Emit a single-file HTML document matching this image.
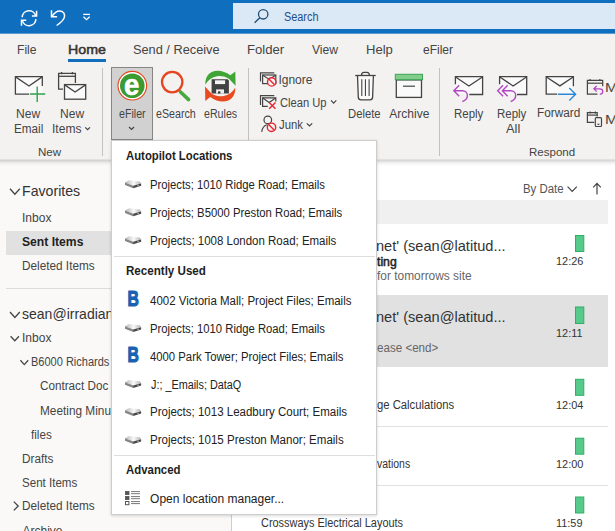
<!DOCTYPE html>
<html lang="en">
<head>
<meta charset="utf-8">
<title>Outlook - eFiler menu</title>
<style>
html,body{margin:0;padding:0;}
body{width:615px;height:531px;overflow:hidden;background:#fff;font-family:"Liberation Sans",sans-serif;}
#app{position:relative;width:615px;height:531px;overflow:hidden;background:#fff;}
.abs{position:absolute;}
.t{position:absolute;white-space:nowrap;line-height:1;transform-origin:0 0;z-index:2;}
.t.mn{z-index:12;}
.t.sb{-webkit-text-stroke:.5px currentColor;}
svg{position:absolute;overflow:visible;}
#titlebar{left:0;top:0;width:615px;height:34px;background:linear-gradient(#106ebe 0,#106ebe 33px,#5b9acf 33px,#5b9acf 34px);}
#search{left:233px;top:3px;width:382px;height:26px;background:#dbe8f6;}
#tabs{left:0;top:34px;width:615px;height:29px;background:#f3f2f1;}
#ribbon{left:0;top:63px;width:615px;height:97px;background:#f3f2f1;}
#ribshadow{left:0;top:159px;width:615px;height:7px;background:linear-gradient(rgba(0,0,0,.02),rgba(0,0,0,.16) 20%,rgba(0,0,0,.08) 45%,rgba(0,0,0,.03) 70%,rgba(0,0,0,0));}
#folders{left:0;top:160px;width:231px;height:371px;background:#faf9f8;}
#split{left:231px;top:160px;width:1px;height:371px;background:#cdcdcd;}
#list{left:232px;top:160px;width:383px;height:368px;background:#fff;}
#menu{left:111px;top:140px;width:266px;height:375px;box-sizing:border-box;background:#fff;border:1px solid #cdcdcd;z-index:10;box-shadow:0 1px 3px rgba(0,0,0,.16);}
.msep{position:absolute;left:2px;width:261px;height:1px;background:#dedede;}
.z11{z-index:11;}
</style>
</head>
<body>
<div id="app">
<div id="titlebar" class="abs"></div>
<div id="search" class="abs"></div>
<div id="tabs" class="abs"></div>
<div id="ribbon" class="abs"></div>
<div id="folders" class="abs"></div>
<div id="split" class="abs"></div>
<div id="list" class="abs"></div>
<div id="ribshadow" class="abs"></div>
<div class="abs" style="left:68px;top:59px;width:38px;height:3px;background:#106ebe;"></div>
<div class="abs" style="left:102px;top:68px;width:1px;height:88px;background:#c2c2c2;"></div>
<div class="abs" style="left:248px;top:68px;width:1px;height:88px;background:#c2c2c2;"></div>
<div class="abs" style="left:439px;top:68px;width:1px;height:88px;background:#c2c2c2;"></div>
<div class="abs" style="left:111px;top:67px;width:42px;height:73px;box-sizing:border-box;background:#d1d1d1;border:1px solid #858585;"></div>
<div class="abs" style="left:6px;top:231px;width:225px;height:24px;background:#e1e1e1;"></div>
<div class="abs" style="left:6px;top:288px;width:225px;height:1px;background:#dcdcdc;"></div>
<div class="abs" style="left:232px;top:199.5px;width:376px;height:24px;background:#f0f0f0;"></div>
<div class="abs" style="left:232px;top:295px;width:376px;height:72.3px;background:#e1e1e1;"></div>
<div class="abs" style="left:232px;top:426px;width:376px;height:1px;background:#e1e1e1;"></div>
<div class="abs" style="left:232px;top:485px;width:376px;height:1px;background:#e1e1e1;"></div>
<svg id="icons" width="615" height="531" viewBox="0 0 615 531" style="left:0;top:0;z-index:3" fill="none" stroke-linecap="butt" stroke-linejoin="miter">
<!-- title bar icons -->
<g stroke="#fff" stroke-width="1.5">
<path d="M22.200 17.300 A6.900 6.900 0 0 1 35.800 16"/>
<path d="M36.600 10.700 V16.100 H31.900"/>
<path d="M35.900 19.100 A6.900 6.900 0 0 1 22.300 20.400"/>
<path d="M21.500 25.700 V20.300 H26.200"/>
<path d="M51.500 10.300 V16.700 H57.100"/>
<path d="M52.200 16.200 C54.500 12.300 57.700 10.800 60.100 10.900 C63.400 11.100 65.100 14 64.400 17.100 C63.700 20.200 60.400 22.900 56.600 25.500"/>
<path d="M83.2 14.4 H89.9" stroke-width="1.3"/>
<path d="M83.5 16.7 L86.55 19.6 L89.6 16.7" stroke-width="1.3"/>
</g>
<g stroke="#1f4e79" stroke-width="1.3">
<circle cx="263.2" cy="14.3" r="4.7"/>
<path d="M259.8 17.8 L254.6 22.8"/>
</g>
<!-- New Email -->
<g stroke="#444" stroke-width="1.3">
<rect x="15.400" y="76.600" width="26.900" height="17.600" fill="#fafafa" stroke="none"/><path d="M29 94.2 H15.4 V76.6 H42.3 V86"/>
<path d="M15.6 76.9 L29 86 L42.1 76.9"/>
</g>
<path d="M29.8 94 H45.2 M37.2 86.4 V102" stroke="#2fa24b" stroke-width="1.4"/>
<!-- New Items -->
<g stroke="#444" stroke-width="1.3">
<path d="M63 89.2 H58.6 V73.3 H75.4 V83"/>
<path d="M58.6 76.3 H75.4"/>
<path d="M61.6 72 V74.3 M72.4 72 V74.3"/>
<rect x="64.5" y="84.6" width="21.2" height="14.6" fill="#fafafa"/>
<path d="M64.7 84.9 L75.1 92 L85.5 84.9"/>
</g>
<path d="M85.2 127.3 L87.6 129.7 L90 127.3" stroke="#444" stroke-width="1.2"/>
<!-- eFiler -->
<circle cx="132.3" cy="85.7" r="14.3" fill="#fff" stroke="#e5461f" stroke-width="1.1"/>
<circle cx="132.3" cy="85.7" r="12.3" fill="#3b9a30"/>
<path d="M129 127 L131.5 129.5 L134 127" stroke="#444" stroke-width="1.2"/>
<!-- eSearch -->
<path d="M180.5 92 L188.6 99.6" stroke="#47a83f" stroke-width="3.6" stroke-linecap="round"/>
<circle cx="172.2" cy="82.1" r="10.2" stroke="#e5461f" stroke-width="2.3"/>
<!-- eRules -->
<path id="era" d="M205.4 84.6 C205 79 207.300 74.3 211.800 72.100 C217 69.600 224 70.700 230.400 75.300 L235.300 71.500 L235.600 85.800 L228.900 78.700 C224.500 76.300 220.500 75.700 217 76.300 C212 77.200 208 80.200 205.400 84.600 Z" fill="#3fa535"/>
<path d="M205.4 84.6 C205 79 207.300 74.3 211.800 72.100 C217 69.600 224 70.700 230.400 75.300 L235.300 71.500 L235.600 85.800 L228.900 78.700 C224.500 76.300 220.500 75.700 217 76.300 C212 77.200 208 80.200 205.400 84.600 Z" fill="#ea4a1f" transform="rotate(180 220.300 86.200)"/>
<path d="M211.6 79.2 H227.6 L228.9 80.5 V93.5 H211.6 Z" fill="#414141"/>
<rect x="215" y="80.3" width="10.1" height="3.8" fill="#f4f4f4"/>
<rect x="216.100" y="89.4" width="7.9" height="4.1" fill="#eee"/>
<rect x="218" y="91.400" width="2.4" height="2.1" fill="#333"/>
<!-- Ignore -->
<g stroke="#444" stroke-width="1.2">
<path d="M260.500 81.6 V72.8 H274.3"/>
<rect x="262.6" y="75" width="13.2" height="8.6"/>
<path d="M262.800 75.2 L269.2 79.4 L275.6 75.2"/>
</g>
<circle cx="271.7" cy="81.9" r="4.200" fill="#f3f3f3" stroke="#e8262f" stroke-width="1.4"/>
<path d="M268.800 79 L274.600 84.800" stroke="#e8262f" stroke-width="1.4"/>
<!-- Clean Up -->
<g stroke="#444" stroke-width="1.2">
<path d="M260.500 105.100 V95.7 H274.3"/>
<path d="M267.800 106.400 H262.600 V97.900 H275.800 V101.500"/>
<path d="M262.800 98.100 L269.200 102.600 L275.600 98.100"/>
</g>
<path d="M269.2 102.500 L275.500 108.800 M275.500 102.500 L269.200 108.800" stroke="#e8262f" stroke-width="1.4"/>
<path d="M331 100.400 L333.650 103.050 L336.300 100.400" stroke="#444" stroke-width="1.2"/>
<!-- Junk -->
<g stroke="#444" stroke-width="1.200">
<circle cx="267.800" cy="119.900" r="3.800"/>
<path d="M261.700 131.800 C262.200 128 264 125.700 266.800 124.800"/>
</g>
<circle cx="271.500" cy="127.300" r="4.200" fill="#f3f3f3" stroke="#e8262f" stroke-width="1.400"/>
<path d="M268.600 124.400 L274.400 130.200" stroke="#e8262f" stroke-width="1.400"/>
<path d="M306.800 123.300 L309.500 126 L312.200 123.300" stroke="#444" stroke-width="1.200"/>
<!-- Delete -->
<g stroke="#444" stroke-width="1.300">
<path d="M357.500 75.600 L358.300 97.400 Q358.500 99.800 360.900 99.800 H370 Q372.400 99.800 372.600 97.400 L373.400 75.600" fill="#fafafa"/>
<path d="M355.200 75.500 H375.700"/>
<path d="M361.500 75.300 Q361.600 72.300 364 72.300 H367 Q369.300 72.300 369.400 75.300"/>
<path d="M361.800 79.200 V96 M365.450 79.200 V96 M369.100 79.200 V96" stroke-width="1.100"/>
</g>
<!-- Archive -->
<rect x="396.300" y="79.900" width="25.200" height="17.500" fill="#fafafa" stroke="#444" stroke-width="1.300"/>
<rect x="395.300" y="74.300" width="27.200" height="5.400" fill="#82cd8c" stroke="#3aa554" stroke-width="1"/>
<path d="M403 86.200 H415" stroke="#444" stroke-width="1.200"/>
<!-- Reply -->
<g stroke="#444" stroke-width="1.300">
<rect x="455.400" y="76.700" width="27.200" height="17.800" fill="#fafafa" stroke="none"/><path d="M455.400 84.300 V76.700 H482.600 V94.500 H469.300"/>
<path d="M455.600 77 L468.900 86 L482.400 77"/>
</g>
<path d="M459.200 85.200 L453.800 90.700 L459.200 96.200 M454 90.700 H462.400 C465.600 90.700 467.400 93 467.400 95.600 C467.400 98.400 465.400 100.600 462.400 101.500" stroke="#b146c2" stroke-width="1.400"/>
<!-- Reply All -->
<g stroke="#444" stroke-width="1.300">
<rect x="499.600" y="76.700" width="27.100" height="17.800" fill="#fafafa" stroke="none"/><path d="M499.600 84.300 V76.700 H526.700 V94.500 H517"/>
<path d="M499.800 77 L513.100 86 L526.500 77"/>
</g>
<path d="M503.100 85.200 L497.700 90.700 L503.100 96.200 M507.700 85.200 L502.300 90.700 L507.700 96.200 M502.500 90.700 H510.700 C513.900 90.700 515.700 93 515.700 95.600 C515.700 98.400 513.700 100.600 510.700 101.500" stroke="#b146c2" stroke-width="1.400"/>
<!-- Forward -->
<g stroke="#444" stroke-width="1.300">
<rect x="546.200" y="76.700" width="27.200" height="17.500" fill="#fafafa" stroke="none"/><path d="M573.400 86.300 V76.700 H546.200 V94.200 H557.200"/>
<path d="M546.400 77 L559.900 85.900 L573.200 77"/>
</g>
<path d="M558 94.300 H575.400 M569.300 88 L575.600 94.300 L569.300 100.600" stroke="#2b88d8" stroke-width="1.400"/>
<!-- Meeting reply -->
<g stroke="#444" stroke-width="1.200">
<path d="M602.700 86.300 V80.300 H587.400 V94.100 H597.400"/>
<path d="M587.400 83.200 H602.700"/>
<path d="M590.100 79 V81 M599.900 79 V81"/>
</g>
<path d="M596.700 86 L593.900 88.800 L596.700 91.600 M594 88.800 H599.800 C601.700 88.800 602.800 90 602.800 91.500 C602.800 93 601.600 94.100 599.800 94.300" stroke="#b146c2" stroke-width="1.300"/>
<!-- Meeting 2 -->
<g stroke="#444" stroke-width="1.200">
<path d="M597.200 116.600 V112.700 H587.400 V122.300 H594.200"/>
<path d="M587.400 115.100 H597.200"/>
<path d="M590.100 111.400 V113.400 M595.400 111.400 V113.400"/>
<rect x="595.300" y="117.600" width="6.200" height="8.900" rx="1"/>
<path d="M597.400 124.300 H599.400"/>
</g>
<!-- folder chevrons -->
<g stroke="#444" stroke-width="1.300">
<path d="M10 188.800 L14.900 194.300 L19.800 188.800"/>
<path d="M10 312 L14.900 317.500 L19.800 312"/>
<path d="M10.600 336.300 L14.800 340.800 L19 336.300"/>
<path d="M20.400 360.300 L24.300 364.600 L28.200 360.300"/>
<path d="M13.800 501.600 L18.200 506 L13.800 510.400"/>
</g>
<!-- By Date chevron + arrow -->
<g stroke="#444" stroke-width="1.200">
<path d="M567.600 186.600 L572.200 191.400 L576.800 186.600"/>
<path d="M597 194.400 V183.600 M593.200 187.300 L597 183.400 L600.800 187.300"/>
</g>
<!-- category blocks -->
<g fill="#57c98a" stroke="#2fae66" stroke-width="1">
<rect x="575.500" y="235.500" width="8.300" height="16"/>
<rect x="575.500" y="307" width="8.300" height="16.500"/>
<rect x="575.500" y="379.300" width="8.300" height="16"/>
<rect x="575.500" y="438.200" width="8.300" height="16"/>
<rect x="575.500" y="497" width="8.300" height="16"/>
</g>
</svg>
<span class="t" style="left:123.900px;top:69.600px;font-size:30px;font-weight:700;color:#fff;z-index:4;transform:scaleX(.92);-webkit-text-stroke:.6px #fff;">e</span>

<div id="menu" class="abs">
<div class="msep" style="top:115px"></div>
<div class="msep" style="top:314px"></div>
</div>
<svg id="micons" width="615" height="531" viewBox="0 0 615 531" style="left:0;top:0;z-index:11" fill="none">
<defs><linearGradient id="dtop" x1="0" y1="0" x2="1" y2="0"><stop offset="0" stop-color="#b4b4b4"/><stop offset=".55" stop-color="#fafafa"/><stop offset="1" stop-color="#b0b0b0"/></linearGradient></defs>
<g transform="translate(125 180.3)">
<path d="M0 2.300 L4 0 L14.800 1.300 L16.100 3.200 L8.200 5.500 Z" fill="url(#dtop)"/>
<path d="M0 2.300 L8.200 5.500 V8 L0 4.700 Z" fill="#858585"/>
<path d="M8.200 5.500 L16.100 3.200 V5.500 L8.200 8 Z" fill="#474747"/>
<path d="M12.300 5 L14 4.500 V5.700 L12.300 6.200 Z" fill="#9aa0b4"/>
</g>
<g transform="translate(125 208.3)">
<path d="M0 2.300 L4 0 L14.800 1.300 L16.100 3.200 L8.200 5.500 Z" fill="url(#dtop)"/>
<path d="M0 2.300 L8.200 5.500 V8 L0 4.700 Z" fill="#858585"/>
<path d="M8.200 5.500 L16.100 3.200 V5.500 L8.200 8 Z" fill="#474747"/>
<path d="M12.300 5 L14 4.500 V5.700 L12.300 6.200 Z" fill="#9aa0b4"/>
</g>
<g transform="translate(125 236.3)">
<path d="M0 2.300 L4 0 L14.800 1.300 L16.100 3.200 L8.200 5.500 Z" fill="url(#dtop)"/>
<path d="M0 2.300 L8.200 5.500 V8 L0 4.700 Z" fill="#858585"/>
<path d="M8.200 5.500 L16.100 3.200 V5.500 L8.200 8 Z" fill="#474747"/>
<path d="M12.300 5 L14 4.500 V5.700 L12.300 6.200 Z" fill="#9aa0b4"/>
</g>
<g transform="translate(125 324)">
<path d="M0 2.300 L4 0 L14.800 1.300 L16.100 3.200 L8.200 5.500 Z" fill="url(#dtop)"/>
<path d="M0 2.300 L8.200 5.500 V8 L0 4.700 Z" fill="#858585"/>
<path d="M8.200 5.500 L16.100 3.200 V5.500 L8.200 8 Z" fill="#474747"/>
<path d="M12.300 5 L14 4.500 V5.700 L12.300 6.200 Z" fill="#9aa0b4"/>
</g>
<g transform="translate(125 380)">
<path d="M0 2.300 L4 0 L14.800 1.300 L16.100 3.200 L8.200 5.500 Z" fill="url(#dtop)"/>
<path d="M0 2.300 L8.200 5.500 V8 L0 4.700 Z" fill="#858585"/>
<path d="M8.200 5.500 L16.100 3.200 V5.500 L8.200 8 Z" fill="#474747"/>
<path d="M12.300 5 L14 4.500 V5.700 L12.300 6.200 Z" fill="#9aa0b4"/>
</g>
<g transform="translate(125 408)">
<path d="M0 2.300 L4 0 L14.800 1.300 L16.100 3.200 L8.200 5.500 Z" fill="url(#dtop)"/>
<path d="M0 2.300 L8.200 5.500 V8 L0 4.700 Z" fill="#858585"/>
<path d="M8.200 5.500 L16.100 3.200 V5.500 L8.200 8 Z" fill="#474747"/>
<path d="M12.300 5 L14 4.500 V5.700 L12.300 6.200 Z" fill="#9aa0b4"/>
</g>
<g transform="translate(125 436)">
<path d="M0 2.300 L4 0 L14.800 1.300 L16.100 3.200 L8.200 5.500 Z" fill="url(#dtop)"/>
<path d="M0 2.300 L8.200 5.500 V8 L0 4.700 Z" fill="#858585"/>
<path d="M8.200 5.500 L16.100 3.200 V5.500 L8.200 8 Z" fill="#474747"/>
<path d="M12.300 5 L14 4.500 V5.700 L12.300 6.200 Z" fill="#9aa0b4"/>
</g>
<g transform="translate(125 491)" stroke="#555" stroke-width=".8">
<rect x=".4" y=".4" width="3.600" height="3.200" fill="#555"/>
<rect x=".4" y="5.400" width="3.600" height="3.200" fill="#555"/>
<rect x=".500" y="10.500" width="3.400" height="3.200" fill="#fff" stroke-width="1"/>
<path d="M6 .6 H15 M6 2.700 H15 M6 5.600 H15 M6 7.700 H15 M6 10.600 H15 M6 12.600 H15"/>
</g>
<text x="127.400" y="305.6" font-family="Liberation Sans, sans-serif" font-size="21.600" font-weight="700" fill="#1a62b0" stroke="#1a62b0" stroke-width="1.1" stroke-linejoin="round" transform="translate(127.400 0) scale(.73 1) translate(-127.400 0)">B</text>
<text x="127.400" y="361.6" font-family="Liberation Sans, sans-serif" font-size="21.600" font-weight="700" fill="#1a62b0" stroke="#1a62b0" stroke-width="1.1" stroke-linejoin="round" transform="translate(127.400 0) scale(.73 1) translate(-127.400 0)">B</text>
</svg>

<span class="t" id="t0" style="left:284.3px;top:10.94px;font-size:12px;color:#1e4f8a;transform:scaleX(0.9073);">Search</span>
<span class="t" id="t1" style="left:16.6px;top:43.06px;font-size:13.4px;color:#444;transform:scaleX(0.9038);">File</span>
<span class="t sb" id="t2" style="left:67.6px;top:43.06px;font-size:13.4px;color:#333;transform:scaleX(1.0602);">Home</span>
<span class="t" id="t3" style="left:132.6px;top:43.06px;font-size:13.4px;color:#444;transform:scaleX(0.9533);">Send / Receive</span>
<span class="t" id="t4" style="left:246.6px;top:43.06px;font-size:13.4px;color:#444;transform:scaleX(0.9811);">Folder</span>
<span class="t" id="t5" style="left:312.3px;top:43.06px;font-size:13.4px;color:#444;transform:scaleX(0.9052);">View</span>
<span class="t" id="t6" style="left:366.3px;top:43.06px;font-size:13.4px;color:#444;transform:scaleX(0.9761);">Help</span>
<span class="t" id="t7" style="left:422.7px;top:43.06px;font-size:13.4px;color:#444;transform:scaleX(0.8954);">eFiler</span>
<span class="t" id="t8" style="left:16.4px;top:107.54px;font-size:12px;color:#444;transform:scaleX(1.0028);">New</span>
<span class="t" id="t9" style="left:13.7px;top:123.24px;font-size:12px;color:#444;transform:scaleX(0.9769);">Email</span>
<span class="t" id="t10" style="left:59.6px;top:107.54px;font-size:12px;color:#444;transform:scaleX(1.0028);">New</span>
<span class="t" id="t11" style="left:51.7px;top:123.24px;font-size:12px;color:#444;transform:scaleX(1.0028);">Items</span>
<span class="t" id="t12" style="left:38.1px;top:146.67px;font-size:11.5px;color:#444;transform:scaleX(1.0048);">New</span>
<span class="t" id="t13" style="left:119.0px;top:107.54px;font-size:12px;color:#444;transform:scaleX(0.8864);">eFiler</span>
<span class="t" id="t14" style="left:155.6px;top:107.54px;font-size:12px;color:#444;transform:scaleX(0.8898);">eSearch</span>
<span class="t" id="t15" style="left:203.7px;top:107.54px;font-size:12px;color:#444;transform:scaleX(0.8870);">eRules</span>
<span class="t" id="t16" style="left:278.4px;top:73.94px;font-size:12px;color:#444;">Ignore</span>
<span class="t" id="t17" style="left:279.8px;top:96.54px;font-size:12px;color:#444;transform:scaleX(0.9304);">Clean Up</span>
<span class="t" id="t18" style="left:279.0px;top:119.24px;font-size:12px;color:#444;transform:scaleX(0.9448);">Junk</span>
<span class="t" id="t19" style="left:348.4px;top:107.54px;font-size:12px;color:#444;transform:scaleX(0.9396);">Delete</span>
<span class="t" id="t20" style="left:389.3px;top:107.54px;font-size:12px;color:#444;">Archive</span>
<span class="t" id="t21" style="left:453.7px;top:107.54px;font-size:12px;color:#444;transform:scaleX(0.9554);">Reply</span>
<span class="t" id="t22" style="left:497.3px;top:107.54px;font-size:12px;color:#444;transform:scaleX(0.9549);">Reply</span>
<span class="t" id="t23" style="left:506.2px;top:123.04px;font-size:12px;color:#444;transform:scaleX(1.0663);">All</span>
<span class="t" id="t24" style="left:537.1px;top:107.24px;font-size:12px;color:#444;transform:scaleX(0.9837);">Forward</span>
<span class="t" id="t25" style="left:528.9px;top:146.67px;font-size:11.5px;color:#444;transform:scaleX(1.0020);">Respond</span>
<span class="t" id="t26" style="left:605.3px;top:81.84px;font-size:12px;color:#444;transform:scaleX(1.2704);">M</span>
<span class="t" id="t27" style="left:605.3px;top:113.94px;font-size:12px;color:#444;transform:scaleX(1.2704);">M</span>
<span class="t" id="t28" style="left:21.8px;top:182.60px;font-size:15px;color:#333;transform:scaleX(0.9426);">Favorites</span>
<span class="t" id="t29" style="left:21.8px;top:212.44px;font-size:12px;color:#444;transform:scaleX(1.0028);">Inbox</span>
<span class="t" id="t30" style="left:22.0px;top:236.44px;font-size:12px;color:#222;font-weight:700;transform:scaleX(1.0115);">Sent Items</span>
<span class="t" id="t31" style="left:21.8px;top:260.44px;font-size:12px;color:#444;transform:scaleX(0.9812);">Deleted Items</span>
<span class="t" id="t32" style="left:21.7px;top:306.40px;font-size:15px;color:#333;transform:scaleX(0.9350);">sean@irradian</span>
<span class="t" id="t33" style="left:21.8px;top:332.44px;font-size:12px;color:#444;transform:scaleX(1.0028);">Inbox</span>
<span class="t" id="t34" style="left:30.6px;top:356.44px;font-size:12px;color:#444;transform:scaleX(0.9180);">B6000 Richards</span>
<span class="t" id="t35" style="left:39.8px;top:380.44px;font-size:12px;color:#444;transform:scaleX(0.9750);">Contract Doc</span>
<span class="t" id="t36" style="left:39.6px;top:404.54px;font-size:12px;color:#444;transform:scaleX(0.9850);">Meeting Minu</span>
<span class="t" id="t37" style="left:31.3px;top:428.54px;font-size:12px;color:#444;transform:scaleX(0.9704);">files</span>
<span class="t" id="t38" style="left:21.8px;top:452.54px;font-size:12px;color:#444;transform:scaleX(0.9786);">Drafts</span>
<span class="t" id="t39" style="left:21.8px;top:476.54px;font-size:12px;color:#444;transform:scaleX(0.9637);">Sent Items</span>
<span class="t" id="t40" style="left:21.8px;top:500.44px;font-size:12px;color:#444;transform:scaleX(0.9812);">Deleted Items</span>
<span class="t" id="t41" style="left:22.5px;top:524.54px;font-size:12px;color:#444;">Archive</span>
<span class="t" id="t42" style="left:522.9px;top:183.04px;font-size:12px;color:#555;transform:scaleX(0.9510);">By Date</span>
<span class="t m" id="t43" style="left:376.3px;top:237.70px;font-size:15px;color:#333;transform:scaleX(0.9733);">net' (sean@latitud...</span>
<span class="t m sb" id="t44" style="left:377.0px;top:255.54px;font-size:12px;color:#222;transform:scaleX(1.0205);">ting</span>
<span class="t m" id="t45" style="left:377.0px;top:270.04px;font-size:12px;color:#666;transform:scaleX(0.9926);">for tomorrows site</span>
<span class="t m" id="t46" style="left:556.3px;top:255.87px;font-size:11.5px;color:#333;transform:scaleX(0.9500);">12:26</span>
<span class="t m" id="t47" style="left:376.3px;top:309.40px;font-size:15px;color:#333;transform:scaleX(0.9733);">net' (sean@latitud...</span>
<span class="t m" id="t48" style="left:377.0px;top:341.84px;font-size:12px;color:#666;transform:scaleX(0.9668);">ease &lt;end&gt;</span>
<span class="t m" id="t49" style="left:556.3px;top:327.87px;font-size:11.5px;color:#333;transform:scaleX(0.9481);">12:11</span>
<span class="t m" id="t50" style="left:377.0px;top:399.24px;font-size:12px;color:#333;transform:scaleX(0.9403);">ge Calculations</span>
<span class="t m" id="t51" style="left:556.3px;top:399.87px;font-size:11.5px;color:#333;transform:scaleX(0.9500);">12:04</span>
<span class="t m" id="t52" style="left:377.0px;top:458.34px;font-size:12px;color:#333;transform:scaleX(0.8709);">vations</span>
<span class="t m" id="t53" style="left:556.3px;top:458.87px;font-size:11.5px;color:#333;transform:scaleX(0.9500);">12:00</span>
<span class="t m" id="t54" style="left:260.9px;top:517.44px;font-size:12px;color:#333;transform:scaleX(0.9102);">Crossways Electrical Layouts</span>
<span class="t m" id="t55" style="left:556.3px;top:517.87px;font-size:11.5px;color:#333;transform:scaleX(0.9481);">11:59</span>
<span class="t mn" id="t56" style="left:125.5px;top:149.94px;font-size:12px;color:#1e1e1e;font-weight:700;transform:scaleX(0.9443);">Autopilot Locations</span>
<span class="t mn" id="t57" style="left:149.9px;top:178.84px;font-size:12px;color:#222;transform:scaleX(0.9404);">Projects; 1010 Ridge Road; Emails</span>
<span class="t mn" id="t58" style="left:149.9px;top:206.84px;font-size:12px;color:#222;transform:scaleX(0.9417);">Projects; B5000 Preston Road; Emails</span>
<span class="t mn" id="t59" style="left:149.9px;top:234.84px;font-size:12px;color:#222;transform:scaleX(0.9567);">Projects; 1008 London Road; Emails</span>
<span class="t mn" id="t60" style="left:126.4px;top:264.74px;font-size:12px;color:#1e1e1e;font-weight:700;transform:scaleX(0.9659);">Recently Used</span>
<span class="t mn" id="t61" style="left:150.3px;top:294.54px;font-size:12px;color:#222;transform:scaleX(0.9568);">4002 Victoria Mall; Project Files; Emails</span>
<span class="t mn" id="t62" style="left:149.9px;top:322.54px;font-size:12px;color:#222;transform:scaleX(0.9404);">Projects; 1010 Ridge Road; Emails</span>
<span class="t mn" id="t63" style="left:150.3px;top:350.54px;font-size:12px;color:#222;transform:scaleX(0.9423);">4000 Park Tower; Project Files; Emails</span>
<span class="t mn" id="t64" style="left:150.5px;top:378.54px;font-size:12px;color:#222;transform:scaleX(0.9020);">J:; _Emails; DataQ</span>
<span class="t mn" id="t65" style="left:149.9px;top:406.44px;font-size:12px;color:#222;transform:scaleX(0.9590);">Projects; 1013 Leadbury Court; Emails</span>
<span class="t mn" id="t66" style="left:149.9px;top:434.34px;font-size:12px;color:#222;transform:scaleX(0.9617);">Projects; 1015 Preston Manor; Emails</span>
<span class="t mn" id="t67" style="left:125.5px;top:463.64px;font-size:12px;color:#1e1e1e;font-weight:700;transform:scaleX(0.9506);">Advanced</span>
<span class="t mn" id="t68" style="left:150.1px;top:493.34px;font-size:12px;color:#222;">Open location manager...</span>
</div>
</body>
</html>
